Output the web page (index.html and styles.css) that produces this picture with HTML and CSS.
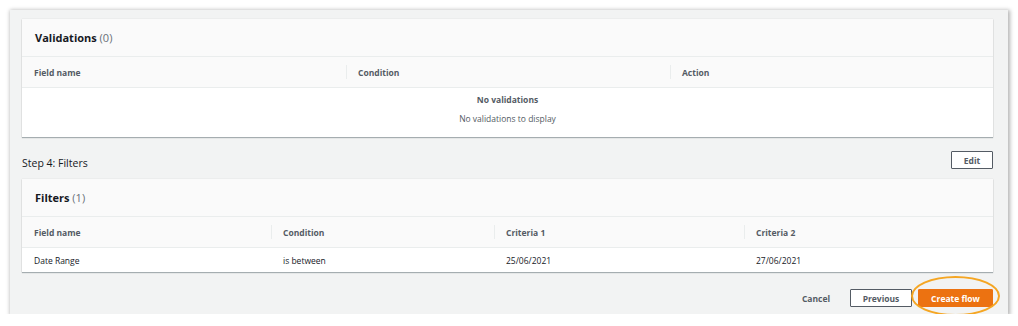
FILE: index.html
```html
<!DOCTYPE html>
<html lang="en">
<head>
    <meta charset="UTF-8">
    <title>Review - Create flow</title>
    <link rel="stylesheet" href="styles.css">
</head>
<body>
    <div class="frame">
        <div class="card">
            <div class="card-header">
                <h2>Validations <span class="count">(0)</span></h2>
            </div>
            <div class="table-head cols-3">
                <div class="th">Field name</div>
                <div class="th">Condition</div>
                <div class="th">Action</div>
            </div>
            <div class="empty">
                <div class="empty-title">No validations</div>
                <div class="empty-text">No validations to display</div>
            </div>
        </div>

        <div class="step-header">
            <h3>Step 4: Filters</h3>
            <button class="btn">Edit</button>
        </div>

        <div class="card">
            <div class="card-header">
                <h2>Filters <span class="count">(1)</span></h2>
            </div>
            <div class="table-head cols-4">
                <div class="th">Field name</div>
                <div class="th">Condition</div>
                <div class="th">Criteria 1</div>
                <div class="th">Criteria 2</div>
            </div>
            <div class="table-row cols-4">
                <div class="td">Date Range</div>
                <div class="td">is between</div>
                <div class="td">25/06/2021</div>
                <div class="td">27/06/2021</div>
            </div>
        </div>

        <div class="actions">
            <button class="btn-link">Cancel</button>
            <button class="btn">Previous</button>
            <div class="highlight">
                <button class="btn btn-primary">Create flow</button>
                <span class="ring"></span>
            </div>
        </div>
    </div>
</body>
</html>
```

FILE: styles.css
```css
body {
    margin: 0;
    background: #ffffff;
    font-family: 'Open Sans', 'Noto Sans', sans-serif;
    color: #16191f;
}
.frame {
    margin: 10px 0 0 10px;
    width: 998px;
    height: 304px;
    box-sizing: border-box;
    padding: 9px 15px 0 12px;
    background: #f2f3f3;
    box-shadow: 1px 1px 4px 1px rgba(0,0,0,0.3);
}
.card {
    background: #ffffff;
    box-shadow: 0 1px 1px rgba(0,28,36,0.3), 0 0 1px rgba(0,28,36,0.15);
}
.card-header {
    height: 38px;
    display: flex;
    align-items: center;
    padding: 0 13px;
    background: #fafafa;
    border-bottom: 1px solid #eaeded;
    box-sizing: border-box;
}
.card-header h2 {
    margin: 0;
    font-size: 11px;
    font-weight: 700;
}
.count {
    font-weight: 400;
    color: #687078;
}
.table-head, .table-row {
    display: grid;
}
.cols-3 {
    grid-template-columns: 324px 324px 1fr;
}
.cols-4 {
    grid-template-columns: 249px 223px 250px 1fr;
}
.table-head {
    height: 31px;
    background: #fafafa;
    border-bottom: 1px solid #eaeded;
    box-sizing: border-box;
}
.th {
    display: flex;
    align-items: center;
    padding: 0 12px;
    font-size: 8.5px;
    font-weight: 700;
    color: #545b64;
    position: relative;
}
.th + .th::before {
    content: "";
    position: absolute;
    left: 0;
    top: 8px;
    bottom: 8px;
    border-left: 1px solid #eaeded;
}
.table-row {
    height: 24px;
}
.td {
    display: flex;
    align-items: center;
    padding: 0 12px;
    font-size: 8.5px;
    color: #16191f;
}
.empty {
    height: 49px;
    box-sizing: border-box;
    padding-top: 6px;
    display: flex;
    flex-direction: column;
    align-items: center;
    gap: 8px;
    font-size: 8.5px;
    color: #545b64;
}
.empty-title {
    font-weight: 700;
}
.step-header {
    display: flex;
    justify-content: space-between;
    align-items: center;
    margin: 14px 0 10px;
    height: 18px;
}
.step-header h3 {
    margin: 0;
    padding-top: 5px;
    font-size: 10.5px;
    font-weight: 400;
}
.btn {
    height: 18px;
    padding: 0 11px;
    background: #ffffff;
    border: 1px solid #545b64;
    border-radius: 1px;
    font-family: inherit;
    font-size: 8.5px;
    font-weight: 700;
    color: #545b64;
    cursor: pointer;
}
.step-header .btn {
    width: 42px;
    padding: 0;
}
.actions {
    display: flex;
    justify-content: flex-end;
    align-items: center;
    gap: 6px;
    margin-top: 17px;
}
.btn-link {
    background: none;
    border: none;
    font-family: inherit;
    font-size: 8.5px;
    font-weight: 700;
    color: #545b64;
    margin-right: 8px;
    cursor: pointer;
}
.actions .btn {
    width: 62px;
    padding: 0;
}
.actions .btn-primary {
    width: 75px;
    background: #ec7211;
    border-color: #ec7211;
    color: #ffffff;
}
.highlight {
    position: relative;
    display: flex;
}
.ring {
    position: absolute;
    left: -7px;
    top: -13px;
    width: 85px;
    height: 36px;
    border: 2px solid #f5a623;
    border-radius: 50%;
}
```
